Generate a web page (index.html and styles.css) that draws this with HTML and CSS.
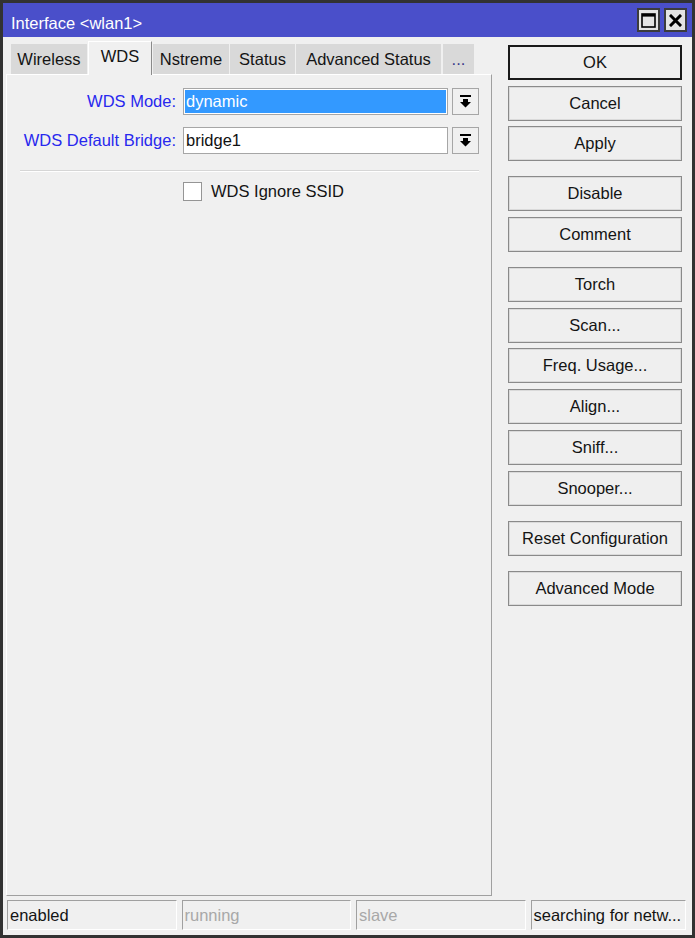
FILE: index.html
```html
<!DOCTYPE html>
<html>
<head>
<meta charset="utf-8">
<link rel="stylesheet" href="styles.css">
</head>
<body>
<div class="window">
  <div class="titlebar">
    <span class="title">Interface &lt;wlan1&gt;</span>
    <div class="tb-buttons">
      <div class="tb-btn">
        <svg width="15" height="15" viewBox="0 0 15 15"><rect x="1" y="1" width="13" height="13" fill="none" stroke="#000" stroke-width="1.6"/><rect x="1" y="1" width="13" height="2.6" fill="#000"/></svg>
      </div>
      <div class="tb-btn">
        <svg width="13" height="13" viewBox="0 0 13 13"><path d="M2 2 L11 11 M11 2 L2 11" stroke="#000" stroke-width="3" stroke-linecap="square"/></svg>
      </div>
    </div>
  </div>
  <div class="body">
    <div class="main">
      <div class="left">
        <div class="tabs">
          <div class="tab w-wireless">Wireless</div>
          <div class="tab active w-wds">WDS</div>
          <div class="tab w-nstreme">Nstreme</div>
          <div class="tab w-status">Status</div>
          <div class="tab w-adv">Advanced Status</div>
          <div class="tab w-more">...</div>
        </div>
        <div class="panel">
          <div class="row">
            <div class="label">WDS Mode:</div>
            <div class="field selected">dynamic</div>
            <div class="drop"><svg width="11" height="13" viewBox="0 0 11 13"><rect x="0" y="0" width="11" height="2" fill="#000"/><path d="M3 4 H8 V7 H11 L5.5 12.5 L0 7 H3 Z" fill="#000"/></svg></div>
          </div>
          <div class="row">
            <div class="label">WDS Default Bridge:</div>
            <div class="field">bridge1</div>
            <div class="drop"><svg width="11" height="13" viewBox="0 0 11 13"><rect x="0" y="0" width="11" height="2" fill="#000"/><path d="M3 4 H8 V7 H11 L5.5 12.5 L0 7 H3 Z" fill="#000"/></svg></div>
          </div>
          <div class="separator"></div>
          <div class="check-row">
            <div class="checkbox"></div>
            <span class="check-label">WDS Ignore SSID</span>
          </div>
        </div>
      </div>
      <div class="right">
        <div class="group">
          <div class="btn default">OK</div>
          <div class="btn">Cancel</div>
          <div class="btn">Apply</div>
        </div>
        <div class="group">
          <div class="btn">Disable</div>
          <div class="btn">Comment</div>
        </div>
        <div class="group">
          <div class="btn">Torch</div>
          <div class="btn">Scan...</div>
          <div class="btn">Freq. Usage...</div>
          <div class="btn">Align...</div>
          <div class="btn">Sniff...</div>
          <div class="btn">Snooper...</div>
        </div>
        <div class="group">
          <div class="btn">Reset Configuration</div>
        </div>
        <div class="group">
          <div class="btn">Advanced Mode</div>
        </div>
      </div>
    </div>
    <div class="statusbar">
      <div class="cell">enabled</div>
      <div class="cell dim">running</div>
      <div class="cell dim">slave</div>
      <div class="cell">searching for netw...</div>
    </div>
  </div>
</div>
</body>
</html>
```

FILE: styles.css
```css
* { box-sizing: border-box; }
html, body { margin: 0; padding: 0; }
body {
  font-family: "Liberation Sans", Arial, sans-serif;
  font-size: 16.5px;
  color: #141414;
  background: #f0f0f0;
}
.window {
  width: 695px;
  height: 938px;
  border: 3px solid #323232;
  background: #f0f0f0;
  display: flex;
  flex-direction: column;
}
.titlebar {
  height: 34px;
  background: #4a4fca;
  display: flex;
  align-items: center;
  justify-content: space-between;
  padding: 0 5px 0 8px;
}
.title {
  color: #fff;
  margin-top: 6px;
}
.tb-buttons {
  display: flex;
  gap: 4px;
}
.tb-btn {
  width: 23px;
  height: 24px;
  border: 2px solid #3c3c3c;
  background: #e4e4e4;
  display: flex;
  align-items: center;
  justify-content: center;
}
.body {
  flex: 1;
  display: flex;
  flex-direction: column;
}
.main {
  flex: 1;
  display: flex;
  padding: 4px 10px 0 3px;
  gap: 16px;
}
.left {
  width: 486px;
  display: flex;
  flex-direction: column;
}
.tabs {
  display: flex;
  align-items: flex-end;
  padding-left: 5px;
  height: 33px;
}
.tab {
  height: 30px;
  background: #d9d9d9;
  margin-right: 1px;
  display: flex;
  align-items: center;
  justify-content: center;
  padding-top: 1px;
  white-space: nowrap;
}
.tab.active {
  height: 34px;
  margin-bottom: -1px;
  background: #f0f0f0;
  border-top: 1px solid #fff;
  border-left: 1px solid #fff;
  border-right: 1px solid #8a8a8a;
  padding-bottom: 6px;
  position: relative;
  z-index: 1;
}
.w-wireless { width: 76px; }
.w-wds { width: 64px; }
.w-nstreme { width: 76px; }
.w-status { width: 65px; }
.w-adv { width: 145px; margin-right: 2px; }
.w-more { width: 31px; color: #3a3a8a; }
.panel {
  flex: 1;
  border-top: 1px solid #fff;
  border-left: 1px solid #fff;
  border-right: 1px solid #a0a0a0;
  border-bottom: 1px solid #a0a0a0;
  padding: 13px 12px 0 13px;
}
.row {
  display: flex;
  height: 27px;
  margin-bottom: 12px;
}
.label {
  width: 156px;
  margin-right: 7px;
  text-align: right;
  color: #2828ee;
  display: flex;
  align-items: center;
  justify-content: flex-end;
}
.field {
  flex: 1;
  border: 1px solid #a6a6a6;
  background: #fff;
  padding-left: 2px;
  display: flex;
  align-items: center;
  color: #111;
}
.field.selected {
  background: #3399ff;
  color: #fff;
  box-shadow: inset 0 0 0 1px #fff;
}
.drop {
  width: 27px;
  margin-left: 4px;
  border: 1px solid #a6a6a6;
  background: #f0f0f0;
  display: flex;
  align-items: center;
  justify-content: center;
}
.separator {
  margin-top: 16px;
  border-top: 1px solid #d6d6d6;
  border-bottom: 1px solid #fff;
}
.check-row {
  display: flex;
  align-items: center;
  margin-top: 10px;
  padding-left: 163px;
}
.checkbox {
  width: 19px;
  height: 19px;
  border: 1px solid #959595;
  background: #fff;
  margin-right: 9px;
}
.right {
  width: 174px;
  padding-top: 4px;
  display: flex;
  flex-direction: column;
  gap: 15px;
}
.group {
  display: flex;
  flex-direction: column;
  gap: 5.7px;
}
.btn {
  height: 35px;
  border: 1px solid #8a8a8a;
  box-shadow: inset 0 0 0 1px #dadada;
  background: #efefef;
  display: flex;
  align-items: center;
  justify-content: center;
  white-space: nowrap;
}
.btn.default {
  border: 2px solid #1a1a1a;
  box-shadow: none;
}
.statusbar {
  display: grid;
  grid-template-columns: 169.5px 169.5px 169.5px 1fr;
  gap: 5px;
  height: 30px;
  margin: 4px 6px 5px 4px;
}
.cell {
  border-top: 1px solid #a0a0a0;
  border-left: 1px solid #a0a0a0;
  border-bottom: 1px solid #fff;
  border-right: 1px solid #fff;
  padding-left: 2px;
  display: flex;
  align-items: center;
  white-space: nowrap;
  overflow: hidden;
}
.cell.dim { color: #a8a8a8; }
```
